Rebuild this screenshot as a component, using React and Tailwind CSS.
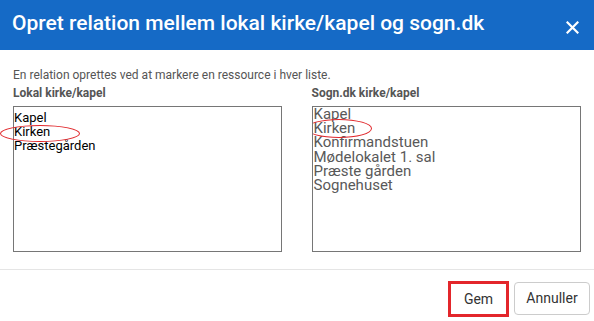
import React from 'react';

const lokal = ['Kapel', 'Kirken', 'Præstegården'];
const sogn = ['Kapel', 'Kirken', 'Konfirmandstuen', 'Mødelokalet 1. sal', 'Præste gården', 'Sognehuset'];

const App = () => {
  return (
    <div className="w-[594px] h-[321px] bg-white overflow-hidden font-['Roboto',sans-serif]">
      {/* Header */}
      <div className="h-[50px] bg-[#156ac6] flex items-center justify-between pl-[12px] pr-[15px]">
        <h1 className="text-white text-[21px] font-medium leading-[26px] -mt-[4px]">
          Opret relation mellem lokal kirke/kapel og sogn.dk
        </h1>
        <svg width="13" height="13" viewBox="0 0 13 13" className="mt-[4px]">
          <path d="M1.5 1.5 L11.5 11.5 M11.5 1.5 L1.5 11.5" stroke="white" strokeWidth="2.2" strokeLinecap="square" />
        </svg>
      </div>

      {/* Body */}
      <div className="px-[13px] pt-[17px]">
        <p className="text-[12px] leading-[17px] text-[#555]">
          En relation oprettes ved at markere en ressource i hver liste.
        </p>
        <div className="flex gap-[30px] mt-[1px]">
          <div className="w-[269px]">
            <div className="text-[12px] leading-[17px] font-bold text-[#555]">Lokal kirke/kapel</div>
            <div className="relative mt-[4px] h-[146px] border border-[#767676] pt-[4px] text-[13px] leading-[14px] text-black">
              {lokal.map((item) => (
                <div key={item}>{item}</div>
              ))}
              <div className="absolute left-[-14px] top-[18px] w-[80px] h-[17px] border-[1.5px] border-[#e0262a] rounded-[50%]" />
            </div>
          </div>
          <div className="w-[270px]">
            <div className="text-[12px] leading-[17px] font-bold text-[#555]">Sogn.dk kirke/kapel</div>
            <div className="relative mt-[4px] h-[146px] border border-[#767676] overflow-hidden pl-[1px] text-[15px] leading-[14.2px] text-[#595959]">
              {sogn.map((item) => (
                <div key={item}>{item}</div>
              ))}
              <div className="absolute left-[-7px] top-[12px] w-[66px] h-[19px] border-[1.5px] border-[#e0262a] rounded-[50%]" />
            </div>
          </div>
        </div>
      </div>

      {/* Footer */}
      <div className="mt-[17px] border-t border-[#e5e5e5] flex justify-end items-start gap-[5px] pr-[4px] pt-[12px]">
        <button className="w-[61px] h-[36px] border-[3px] border-[#e3262b] text-[14px] text-[#333] bg-white -mt-[1px]">
          Gem
        </button>
        <button className="w-[76px] h-[33px] border border-[#ccc] rounded-[4px] text-[14px] text-[#333] bg-white">
          Annuller
        </button>
      </div>
    </div>
  );
};

export default App;
